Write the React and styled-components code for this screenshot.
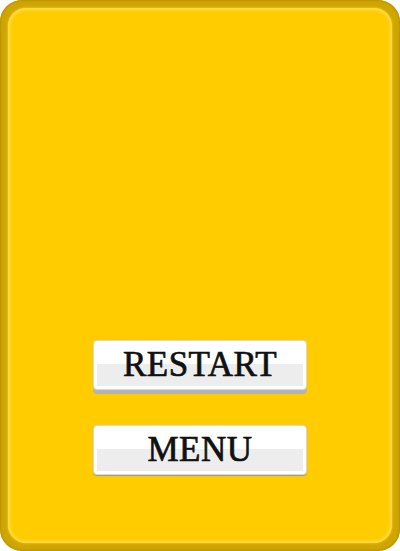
import styled, { createGlobalStyle } from 'styled-components';

const GlobalStyle = createGlobalStyle`
    html, body {
        margin: 0;
        padding: 0;
        background: #ffffff;
    }
`;

const Frame = styled.div`
    box-sizing: border-box;
    width: 400px;
    height: 551px;
    padding: 8px;
    border-radius: 22px;
    background: #cfa600;
    box-shadow: inset 0 0 2px 1px #b89200;
`;

const Panel = styled.div`
    box-sizing: border-box;
    height: 100%;
    display: flex;
    flex-direction: column;
    align-items: center;
    justify-content: flex-end;
    gap: 35px;
    padding-bottom: 68px;
    border-radius: 18px;
    background: #ffcc00;
    box-shadow: inset 0 0 3px 2px #ffdb4d, 0 0 2px 1px #e6bb10;
`;

const Button = styled.button`
    box-sizing: border-box;
    width: 214px;
    height: 50px;
    padding: 0;
    border: 1px solid #d8d8d8;
    border-radius: 4px;
    background: linear-gradient(#ffffff 48%, #ededed 48%);
    box-shadow: inset 0 0 0 3px #ffffff,
        ${(p) => (p.$raised ? '0 4px 0 #b3b3b3' : '0 1px 1px #9a9a9a')};
    font-family: 'Liberation Serif', 'Times New Roman', serif;
    font-size: 35px;
    line-height: 48px;
    letter-spacing: 0.5px;
    color: #111111;
    -webkit-text-stroke: 0.7px #111111;
    cursor: pointer;
`;

export default function App() {
    return (
        <>
            <GlobalStyle />
            <Frame>
                <Panel>
                    <Button $raised>RESTART</Button>
                    <Button>MENU</Button>
                </Panel>
            </Frame>
        </>
    );
}
